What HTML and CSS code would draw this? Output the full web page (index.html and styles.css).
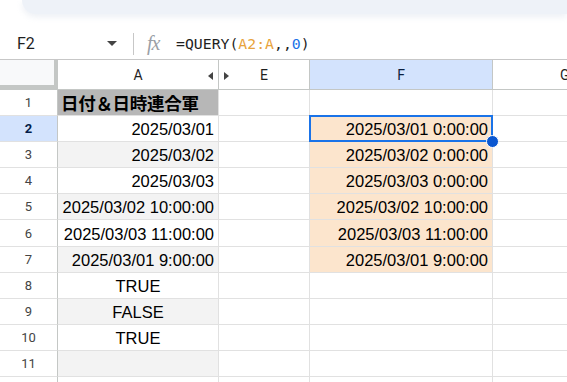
FILE: index.html
```html
<!DOCTYPE html>
<html lang="ja">
<head>
<meta charset="utf-8">
<link rel="stylesheet" href="styles.css">
</head>
<body>
<div class="topbar"><div class="banner"></div></div>
<div class="fbar">
  <div class="namebox">F2</div>
  <div class="caret"></div>
  <div class="sep"></div>
  <div class="fx"><i>fx</i></div>
  <div class="formula">=QUERY(<span class="ref">A2:A</span>,,<span class="num">0</span>)</div>
</div>
<div class="grid">
  <div class="corner"></div>
  <div class="ch cha">A<span class="tri tl"></span></div>
  <div class="ch che"><span class="tri tr"></span>E</div>
  <div class="ch chf">F</div>
  <div class="ch chg">G</div>

  <div class="rh">1</div>
  <div class="c hdr">日付＆日時連合軍</div><div class="c"></div><div class="c"></div><div class="c"></div>

  <div class="rh sel">2</div>
  <div class="c r">2025/03/01</div><div class="c"></div><div class="c r pe cur">2025/03/01 0:00:00<span class="selbox"></span><span class="handle"></span></div><div class="c"></div>

  <div class="rh">3</div>
  <div class="c r band">2025/03/02</div><div class="c"></div><div class="c r pe">2025/03/02 0:00:00</div><div class="c"></div>

  <div class="rh">4</div>
  <div class="c r">2025/03/03</div><div class="c"></div><div class="c r pe">2025/03/03 0:00:00</div><div class="c"></div>

  <div class="rh">5</div>
  <div class="c r band">2025/03/02 10:00:00</div><div class="c"></div><div class="c r pe">2025/03/02 10:00:00</div><div class="c"></div>

  <div class="rh">6</div>
  <div class="c r">2025/03/03 11:00:00</div><div class="c"></div><div class="c r pe">2025/03/03 11:00:00</div><div class="c"></div>

  <div class="rh">7</div>
  <div class="c r band">2025/03/01 9:00:00</div><div class="c"></div><div class="c r pe">2025/03/01 9:00:00</div><div class="c"></div>

  <div class="rh">8</div>
  <div class="c m">TRUE</div><div class="c"></div><div class="c"></div><div class="c"></div>

  <div class="rh">9</div>
  <div class="c m band">FALSE</div><div class="c"></div><div class="c"></div><div class="c"></div>

  <div class="rh">10</div>
  <div class="c m">TRUE</div><div class="c"></div><div class="c"></div><div class="c"></div>

  <div class="rh">11</div>
  <div class="c band"></div><div class="c"></div><div class="c"></div><div class="c"></div>

  <div class="rh"></div>
  <div class="c"></div><div class="c"></div><div class="c"></div><div class="c"></div>
</div>
</body>
</html>
```
FILE: styles.css
```css
* { box-sizing: border-box; }
html, body { margin: 0; padding: 0; background: #fff; overflow: hidden; }
body { width: 567px; height: 382px; font-family: "Liberation Sans", Arial, sans-serif; color: #000; }

.topbar { height: 28px; }
.banner { margin-left: 22px; height: 14px; background: #eef2f8; border-bottom-left-radius: 16px; box-shadow: 0 3px 6px rgba(225,230,238,0.6); }

.fbar { height: 32px; display: flex; align-items: center; border-bottom: 1px solid #c7c7c7; }
.namebox { width: 96px; padding-left: 17px; font-size: 16px; color: #1f1f1f; font-family: Roboto, "Liberation Sans", sans-serif; }
.caret { width: 0; height: 0; border-left: 5px solid transparent; border-right: 5px solid transparent; border-top: 5px solid #444; margin-left: 11px; }
.sep { width: 1px; height: 22px; background: #c7c7c7; margin-left: 16px; }
.fx { margin-left: 13px; width: 22px; font-family: "Liberation Serif", serif; font-size: 20px; color: #9aa0a6; }
.fx i { letter-spacing: -1px; }
.formula { margin-left: 7px; font-family: "DejaVu Sans Mono", "Liberation Mono", monospace; font-size: 14.8px; color: #1f1f1f; }
.ref { color: #e8a33d; }
.num { color: #1a73e8; }

.grid { display: grid; grid-template-columns: 58px 161px 91px 183px 1fr; grid-template-rows: 30px repeat(12, 26.1px); }
.corner { background: #f8f9fa; border-right: 4px solid #c4c7c5; border-bottom: 5px solid #c4c7c5; }
.ch { position: relative; display: flex; align-items: center; justify-content: center; font-size: 14px; color: #1f1f1f; border-right: 1px solid #c4c7c5; border-bottom: 1px solid #c4c7c5; font-family: Roboto, "Liberation Sans", sans-serif; background: #fff; }
.chf { background: #d3e3fd; color: #0b1f3f; }
.chg { border-right: none; justify-content: flex-start; padding-left: 67px; }
.tri { position: absolute; top: 12px; width: 0; height: 0; border-top: 4px solid transparent; border-bottom: 4px solid transparent; }
.tl { right: 5px; border-right: 5px solid #444; }
.tr { left: 5px; border-left: 5px solid #444; }

.rh { display: flex; align-items: center; justify-content: center; font-size: 13px; color: #444; border-right: 1px solid #c4c7c5; border-bottom: 1px solid #e1e1e1; font-family: Roboto, "Liberation Sans", sans-serif; }
.rh.sel { background: #d3e3fd; color: #041e49; font-weight: bold; }

.c { position: relative; display: flex; align-items: center; font-size: 16.5px; border-right: 1px solid #e1e1e1; border-bottom: 1px solid #e1e1e1; white-space: nowrap; padding: 2px 4px 0; }
.c.r { justify-content: flex-end; }
.c.m { justify-content: center; }
.band { background: #f3f3f3; }
.pe { background: #fce5cd; }
.hdr { background: #b7b7b7; font-family: "Noto Sans CJK JP", sans-serif; font-weight: bold; font-size: 17.5px; padding: 0 4px 0 3px; letter-spacing: -0.3px; }
.selbox { position: absolute; left: -1px; top: -1px; right: -1px; bottom: -1px; border: 2px solid #1a73e8; }
.handle { position: absolute; right: -7px; bottom: -7px; width: 13px; height: 13px; border-radius: 50%; background: #0b57d0; border: 1px solid #fff; z-index: 2; }
```
